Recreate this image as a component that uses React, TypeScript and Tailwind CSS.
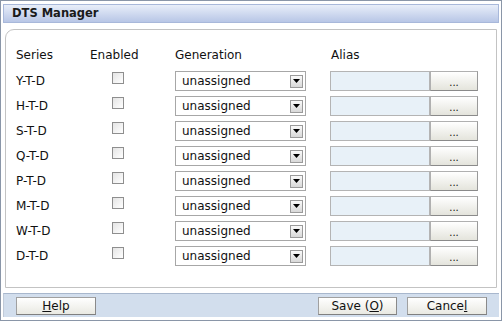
const rows = ['Y-T-D', 'H-T-D', 'S-T-D', 'Q-T-D', 'P-T-D', 'M-T-D', 'W-T-D', 'D-T-D'];

function Select() {
  return (
    <div className="w-[131px] h-[20px] border border-[#a7a7a7] bg-white flex items-center justify-between pl-[6px] pr-[2px]">
      <span>unassigned</span>
      <span className="w-[13px] h-[13px] border border-[#9a9a9a] bg-gradient-to-b from-[#fafafa] to-[#d8d8d8] flex items-center justify-center">
        <svg width="7" height="4" viewBox="0 0 7 4">
          <path d="M0 0H7L3.5 4Z" fill="#000" />
        </svg>
      </span>
    </div>
  );
}

function Button({ children, w }: { children: React.ReactNode; w: string }) {
  return (
    <div
      className={`${w} h-[18px] border border-[#a0a0a0] border-b-[#7f7f7f] border-r-[#8a8a8a] bg-gradient-to-b from-white to-[#e9e9e2] flex items-center justify-center`}
    >
      {children}
    </div>
  );
}

export default function App() {
  return (
    <div
      className="w-[502px] h-[321px] border border-[#8a96a8] bg-white flex flex-col text-[12px] text-[#111]"
      style={{ fontFamily: '"DejaVu Sans", Tahoma, sans-serif' }}
    >
      <div className="mt-[3px] mx-[2px] h-[19px] border border-[#a8b8da] bg-gradient-to-b from-[#e8eef9] to-[#b8c6e6] flex items-center pl-[8px]">
        <span className="font-bold text-[11.5px] text-[#1a1a1a]">DTS Manager</span>
      </div>

      <div className="mt-[6px] ml-[4px] mr-[4px] h-[259px] border border-[#c3c3c3] rounded-tl-[9px] pt-[16px] pl-[10px]">
        <div className="grid grid-cols-[74px_85px_156px_1fr] items-center h-[18px]">
          <span>Series</span>
          <span>Enabled</span>
          <span>Generation</span>
          <span>Alias</span>
        </div>
        <div className="mt-[7px] flex flex-col gap-[5px]">
          {rows.map((r) => (
            <div key={r} className="grid grid-cols-[74px_85px_155px_1fr] items-center h-[20px]">
              <span>{r}</span>
              <span className="pl-[22px] flex">
                <span className="w-[12px] h-[12px] border border-[#8e8e8e] bg-gradient-to-br from-[#e4e4e4] to-white -mt-[6px]" />
              </span>
              <Select />
              <div className="flex">
                <div className="w-[100px] h-[20px] border border-[#b4b4b4] bg-[#e8f1f8]" />
                <div className="w-[48px] h-[20px] border border-[#b0b0b0] border-b-[#8a8a8a] border-r-[#999] bg-gradient-to-b from-white to-[#e4e4dc] flex items-center justify-center text-[10px] pt-[2px]">
                  ...
                </div>
              </div>
            </div>
          ))}
        </div>
      </div>

      <div className="mt-[5px] mx-[2px] h-[24px] border-t border-[#a8b7cd] border-l border-l-[#c0cad8] bg-[#d2deed] flex items-center pl-[12px] pr-[12px]">
        <Button w="w-[80px]">
          <span>
            <span className="underline">H</span>elp
          </span>
        </Button>
        <div className="flex-1" />
        <Button w="w-[79px]">
          <span>
            Save (<span className="underline">O</span>)
          </span>
        </Button>
        <div className="w-[10px]" />
        <Button w="w-[80px]">
          <span>
            Cance<span className="underline">l</span>
          </span>
        </Button>
      </div>
    </div>
  );
}
